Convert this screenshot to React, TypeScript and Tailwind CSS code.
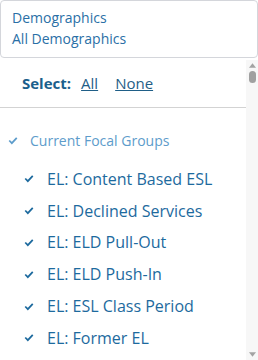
import React from 'react';

const items = [
  'EL: Content Based ESL',
  'EL: Declined Services',
  'EL: ELD Pull-Out',
  'EL: ELD Push-In',
  'EL: ESL Class Period',
  'EL: Former EL',
];

function Check({ className }: { className: string }): JSX.Element {
  return (
    <svg viewBox="0 0 12 10" className={className} fill="none">
      <path d="M1.5 5 L4.6 8.2 L10.5 1.8" stroke="currentColor" strokeWidth="2.1" />
    </svg>
  );
}

export default function App(): JSX.Element {
  return (
    <div
      className="w-[258px] h-[360px] overflow-hidden bg-white flex flex-col"
      style={{ fontFamily: '"Open Sans", "Noto Sans", sans-serif' }}
    >
      {/* 선택 박스 */}
      <div className="h-[58px] shrink-0 border border-[#d4d6db] rounded-[4px] px-[11px] pt-[6px] text-[14px] leading-[21px] text-[#2a6fa6]">
        <p>Demographics</p>
        <p>All Demographics</p>
      </div>
      {/* 드롭다운 */}
      <div className="flex flex-row flex-1 mt-[2px]">
        <div className="flex-1 flex flex-col">
          <div className="flex items-center gap-[10px] pl-[22px] h-[48px] border-b border-[#d3d3d3] text-[15px]">
            <span className="font-bold text-[#1b5f8c]">Select:</span>
            <span className="underline text-[#1f5e87]">All</span>
            <span className="underline text-[#1f5e87] ml-[7px]">None</span>
          </div>
          <div className="flex items-center gap-[12px] pl-[8px] h-[32px] mt-[16px] text-[14px] text-[#5d9ccb]">
            <Check className="w-[10px] h-[9px] text-[#5d9ccb]" />
            <span>Current Focal Groups</span>
          </div>
          <ul className="flex flex-col mt-[7px]">
            {items.map((item, idx) => (
              <li key={idx} className="flex items-center gap-[13px] pl-[24px] h-[31.8px] text-[16px] text-[#1d6a9e]">
                <Check className="w-[10px] h-[9px] text-[#1d6a9e]" />
                <span>{item}</span>
              </li>
            ))}
          </ul>
        </div>
        {/* 스크롤바 */}
        <div className="w-[12px] bg-[#f7f7f7] flex flex-col items-center pt-[3px] pb-[3px]">
          <svg viewBox="0 0 8 5" className="w-[7px] h-[5px]"><path d="M0 5 L4 0 L8 5 Z" fill="#a3a3a3" /></svg>
          <div className="w-[7px] h-[12px] rounded-full bg-[#a0a0a0] mt-[3px]" />
          <div className="flex-1" />
          <svg viewBox="0 0 8 5" className="w-[7px] h-[5px]"><path d="M0 0 L8 0 L4 5 Z" fill="#a3a3a3" /></svg>
        </div>
      </div>
    </div>
  );
}
